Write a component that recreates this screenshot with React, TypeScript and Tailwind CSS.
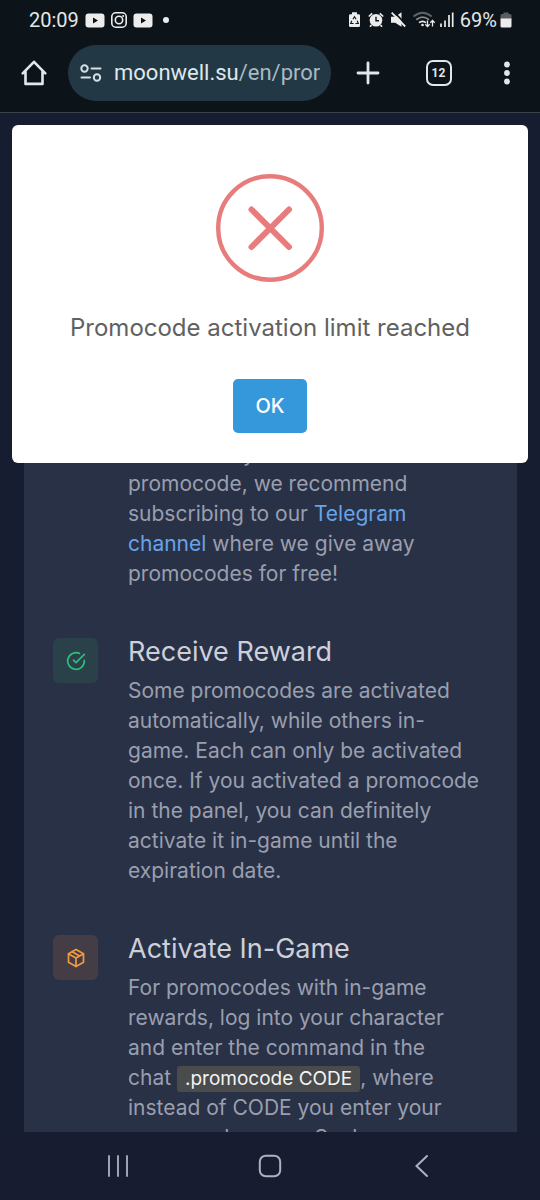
import React from "react";
import { FiCheckCircle } from "react-icons/fi";

const statusText = "text-[20px] leading-none text-[#e3e7ea]";

function YoutubeIcon() {
  return (
    <svg width="20" height="15" viewBox="0 0 20 15" aria-hidden="true">
      <rect x="0.5" y="0.5" width="19" height="14" rx="3" fill="#ececec" />
      <path d="M8 4.5v6l5-3z" fill="#0d1419" />
    </svg>
  );
}

function InstagramIcon() {
  return (
    <svg width="16" height="16" viewBox="1 1 16 16" fill="none" stroke="#ececec" aria-hidden="true">
      <rect x="1.8" y="1.8" width="14.4" height="14.4" rx="4" strokeWidth="1.6" />
      <circle cx="9" cy="9" r="3.7" strokeWidth="1.6" />
      <circle cx="13.1" cy="4.9" r="1" fill="#ececec" stroke="none" />
    </svg>
  );
}

function PackageIcon() {
  return (
    <svg width="20" height="20" viewBox="0 0 20 20" fill="none" stroke="#f29a43" strokeWidth="1.7" strokeLinejoin="round" strokeLinecap="round" aria-hidden="true">
      <path d="M10 1.5l7.5 4.2v8.6L10 18.5l-7.5-4.2V5.7z" />
      <path d="M2.7 5.9L10 10l7.3-4.1M10 10v8.4M6.2 3.7l7.3 4.2" />
    </svg>
  );
}

function StatusIcons() {
  return (
    <svg width="106" height="18" viewBox="348 11 106 18" fill="none" aria-hidden="true">
      {/* battery saver */}
      <path d="M352 12.3h5v1.9h1.7q1.3 0 1.3 1.3v10.2q0 1.3-1.3 1.3h-8.4q-1.3 0-1.3-1.3V15.5q0-1.3 1.3-1.3h1.7z" fill="#ececec" />
      <path d="M352.9 19.2l1.6-2.4 1.6 2.4M357.2 20.8l1.1 2.7h-2.8M353.6 23.5h-2.9l1.1-2.7" stroke="#0d1419" strokeWidth="1.1" />
      {/* alarm */}
      <circle cx="376" cy="20.3" r="6.3" fill="#ececec" />
      <path d="M368.8 16.5l3.4-3.2M383.2 16.5l-3.4-3.2M371.5 25l-1.5 1.7M380.5 25l1.5 1.7" stroke="#ececec" strokeWidth="1.7" />
      <path d="M376 16.8v3.9h3" stroke="#0d1419" strokeWidth="1.4" />
      {/* muted speaker */}
      <path d="M391 16.8h4.2l6.3-4.5v14.5l-6.3-4H391z" fill="#ececec" />
      <path d="M393.5 11.5l13 13.4" stroke="#0d1419" strokeWidth="1.7" />
      <path d="M391.7 12.7l13.5 13.8" stroke="#ececec" strokeWidth="1.8" />
      {/* wifi */}
      <path d="M413.5 16.5q9-7.6 18.2 0" stroke="#5d6469" strokeWidth="1.8" />
      <path d="M416.3 19.7q6.3-5.2 12.7 0" stroke="#84898d" strokeWidth="1.8" />
      <path d="M419 22.6q3.5-2.6 7 0" stroke="#ececec" strokeWidth="1.8" />
      <circle cx="422.5" cy="25" r="1.3" fill="#ececec" />
      <path d="M427.5 20.5v6M425.3 24.3l2.2 2.3 2.2-2.3M432.5 26.5v-6M430.3 22.7l2.2-2.3 2.2 2.3" stroke="#ececec" strokeWidth="1.3" />
      {/* signal */}
      <path d="M441 27v-3.5M445 27v-6.5M449 27V15M452.7 27V12.5" stroke="#ececec" strokeWidth="1.7" />
    </svg>
  );
}

function StatusBar() {
  return (
    <div className="flex h-10 items-center justify-between pr-7 pl-[29px]">
      <div className="flex items-center gap-[6px]">
        <span className={statusText}>20:09</span>
        <YoutubeIcon />
        <InstagramIcon />
        <YoutubeIcon />
        <span className="ml-1 size-[6px] rounded-full bg-[#ececec]" />
      </div>
      <div className="flex items-center gap-[6px]">
        <StatusIcons />
        <span className="flex items-center gap-[3px]">
          <span className={statusText}>69%</span>
          <svg width="12" height="16" viewBox="0 0 12 16" aria-hidden="true">
            <path d="M3.5 0.5h5V2H10q1.5 0 1.5 1.5V7H0.5V3.5Q0.5 2 2 2h1.5z" fill="#5b5d61" />
            <path d="M0.5 6.5h11V14q0 1.5-1.5 1.5H2Q0.5 15.5 0.5 14z" fill="#ececec" />
          </svg>
        </span>
      </div>
    </div>
  );
}

function BrowserBar() {
  return (
    <div className="flex h-[72px] items-center pb-[6px]">
      <button type="button" aria-label="Home" className="flex w-[68px] shrink-0 justify-center">
        <svg width="28" height="28" viewBox="0 0 28 28" fill="none" stroke="#e3e7ea" strokeWidth="2.6" strokeLinejoin="round" strokeLinecap="round">
          <path d="M2.7 14.3L14 2.8l11.3 11.5M5.5 12v12.9h17V12" />
        </svg>
      </button>
      <div className="flex h-14 min-w-0 flex-1 items-center gap-[12px] rounded-full bg-[#233845] pr-[8px] pl-[12px]">
        <svg width="22" height="18" viewBox="0 0 22 18" fill="none" stroke="#d5dfe5" strokeWidth="2" strokeLinecap="round" className="shrink-0" aria-hidden="true">
          <circle cx="4.5" cy="4.5" r="3.2" />
          <path d="M11.5 4.5h9M1.5 13.5h8.5" />
          <circle cx="17" cy="13.5" r="3.2" />
        </svg>
        <a href="#" className="overflow-hidden text-[22px] leading-8 whitespace-nowrap text-[#dfe8ec]">
          moonwell.su<span className="text-[#a9bac4]">/en/pror</span>
        </a>
      </div>
      <button type="button" aria-label="New tab" className="flex w-[73px] shrink-0 justify-center">
        <svg width="24" height="24" viewBox="0 0 24 24" stroke="#e3e7ea" strokeWidth="2.8" strokeLinecap="round">
          <path d="M12 2v20M2 12h20" />
        </svg>
      </button>
      <button type="button" aria-label="Open tabs" className="flex w-[69px] shrink-0 justify-center">
        <span className="flex size-[26px] items-center justify-center rounded-[7px] border-2 border-[#e3e7ea] text-[12px] leading-none font-bold text-[#e3e7ea]">
          12
        </span>
      </button>
      <button type="button" aria-label="Menu" className="flex w-[67px] shrink-0 justify-center">
        <svg width="8" height="26" viewBox="0 0 8 26" fill="#e3e7ea">
          <circle cx="4" cy="4.5" r="2.9" />
          <circle cx="4" cy="13" r="2.9" />
          <circle cx="4" cy="21.5" r="2.9" />
        </svg>
      </button>
    </div>
  );
}

function Alert() {
  return (
    <div
      role="alertdialog"
      aria-labelledby="alert-title"
      className="absolute inset-x-3 top-3 flex flex-col items-center rounded-[6px] bg-white pt-[49px] pb-[30px]"
    >
      <svg width="108" height="108" viewBox="0 0 108 108" fill="none" stroke="#e87c7c" aria-hidden="true">
        <circle cx="54" cy="54" r="51.8" strokeWidth="4.4" />
        <path d="M35.5 35.5l37.5 37.5M73 35.5L35.5 73" strokeWidth="6" strokeLinecap="round" />
      </svg>
      <h2 id="alert-title" className="mt-7 text-[24px] leading-9 text-[#616161]">
        Promocode activation limit reached
      </h2>
      <button type="button" className="mt-[33px] h-[54px] w-[74px] rounded-[5px] bg-[#3498db] text-[20px] font-medium text-white">
        OK
      </button>
    </div>
  );
}

interface StepProps {
  icon?: React.ReactNode;
  title?: string;
  children: React.ReactNode;
}

function Step({ icon, title, children }: StepProps) {
  return (
    <section className="flex gap-[30px]">
      <div className="w-[45px] shrink-0 pt-1">{icon}</div>
      <div className="min-w-0 flex-1">
        {title && <h3 className="mb-[6px] text-[27px] leading-9 text-[#cdd0d9]">{title}</h3>}
        <p className="text-[21px] leading-[30px] text-[#9a9fae]">{children}</p>
      </div>
    </section>
  );
}

export default function App() {
  return (
    <div className="flex h-screen flex-col overflow-hidden bg-[#171d30] font-['Inter','Liberation_Sans',sans-serif]">
      <header className="shrink-0 border-b border-[#3a4149] bg-[#0d1419] font-['Roboto',sans-serif]">
        <StatusBar />
        <BrowserBar />
      </header>

      <main className="relative min-h-0 flex-1 overflow-hidden pt-12">
        <div className="mr-[23px] ml-6 flex flex-col gap-[45px] bg-[#293147] pt-[278px] pr-4 pb-10 pl-[29px]">
          <Step>
            not have any
            <br />
            promocode, we recommend
            <br />
            subscribing to our{" "}
            <a href="#" className="text-[#68a3e8]">
              Telegram
              <br />
              channel
            </a>{" "}
            where we give away
            <br />
            promocodes for free!
          </Step>
          <Step
            title="Receive Reward"
            icon={
              <div className="flex size-[45px] items-center justify-center rounded-[6px] bg-[#2a4149]">
                <FiCheckCircle size={20} color="#2fbe7c" />
              </div>
            }
          >
            Some promocodes are activated
            <br />
            automatically, while others in-
            <br />
            game. Each can only be activated
            <br />
            once. If you activated a promocode
            <br />
            in the panel, you can definitely
            <br />
            activate it in-game until the
            <br />
            expiration date.
          </Step>
          <Step
            title="Activate In-Game"
            icon={
              <div className="flex size-[45px] items-center justify-center rounded-[6px] bg-[#443d46]">
                <PackageIcon />
              </div>
            }
          >
            For promocodes with in-game
            <br />
            rewards, log into your character
            <br />
            and enter the command in the
            <br />
            chat{" "}
            <code className="inline-block rounded-[3px] bg-[#4a4b4d] px-2 py-[2px] font-['Inter',sans-serif] text-[19px] leading-[22px] text-[#f3f3f3]">
              .promocode CODE
            </code>
            , where
            <br />
            instead of CODE you enter your
            <br />
            promocode name. Such
          </Step>
        </div>
        <Alert />
      </main>

      <nav className="flex h-[68px] shrink-0 items-center justify-between bg-[#171c30] px-[107px]">
        <button type="button" aria-label="Recent apps">
          <svg width="22" height="24" viewBox="0 0 22 24" stroke="#aeb2bf" strokeWidth="1.8" strokeLinecap="round">
            <path d="M2 2v20M11 2v20M20 2v20" />
          </svg>
        </button>
        <button type="button" aria-label="Home screen">
          <svg width="24" height="24" viewBox="0 0 24 24" fill="none" stroke="#aeb2bf" strokeWidth="2">
            <rect x="1.8" y="1.8" width="20.4" height="20.4" rx="6" />
          </svg>
        </button>
        <button type="button" aria-label="Back">
          <svg width="22" height="24" viewBox="0 0 22 24" fill="none" stroke="#aeb2bf" strokeWidth="2" strokeLinecap="round">
            <path d="M16 2L5.5 12 16 22" />
          </svg>
        </button>
      </nav>
    </div>
  );
}
